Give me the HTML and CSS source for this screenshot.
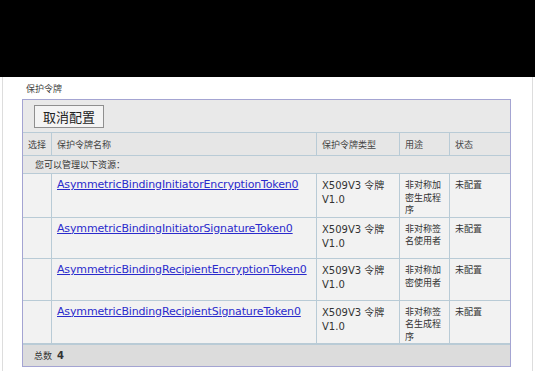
FILE: index.html
```html
<!DOCTYPE html>
<html lang="zh">
<head>
    <meta charset="UTF-8">
    <title>保护令牌</title>
    <link rel="stylesheet" href="styles.css">
</head>
<body>
    <div class="top-bar"></div>
    <div class="page">
        <div class="section-title">保护令牌</div>
        <div class="panel">
            <div class="toolbar">
                <button type="button" class="btn">取消配置</button>
            </div>
            <table class="grid">
                <tr class="head">
                    <td class="col-sel">选择</td>
                    <td class="col-name">保护令牌名称</td>
                    <td class="col-type">保护令牌类型</td>
                    <td class="col-use">用途</td>
                    <td class="col-state">状态</td>
                </tr>
                <tr class="info">
                    <td colspan="5">您可以管理以下资源：</td>
                </tr>
                <tr class="row">
                    <td></td>
                    <td><a href="#">AsymmetricBindingInitiatorEncryptionToken0</a></td>
                    <td class="type">X509V3 令牌 V1.0</td>
                    <td>非对称加密生成程序</td>
                    <td>未配置</td>
                </tr>
                <tr class="row">
                    <td></td>
                    <td><a href="#">AsymmetricBindingInitiatorSignatureToken0</a></td>
                    <td class="type">X509V3 令牌 V1.0</td>
                    <td>非对称签名使用者</td>
                    <td>未配置</td>
                </tr>
                <tr class="row">
                    <td></td>
                    <td><a href="#">AsymmetricBindingRecipientEncryptionToken0</a></td>
                    <td class="type">X509V3 令牌 V1.0</td>
                    <td>非对称加密使用者</td>
                    <td>未配置</td>
                </tr>
                <tr class="row">
                    <td></td>
                    <td><a href="#">AsymmetricBindingRecipientSignatureToken0</a></td>
                    <td class="type">X509V3 令牌 V1.0</td>
                    <td>非对称签名生成程序</td>
                    <td>未配置</td>
                </tr>
            </table>
            <div class="total">总数 <b>4</b></div>
        </div>
    </div>
</body>
</html>
```

FILE: styles.css
```css
body {
    margin: 0;
    background-color: #fff;
    font-family: "DejaVu Sans", "Noto Sans CJK SC", sans-serif;
    font-size: 10px;
    color: #333;
}
.top-bar {
    height: 77px;
    background-color: #000;
}
.page {
    margin: 0 2px;
    border-left: 1px solid #ddd;
    border-right: 1px solid #ddd;
    padding: 5px 20px 5px 19px;
    height: 289px;
}
.section-title {
    font-size: 9px;
    line-height: 14px;
    padding-left: 4px;
    margin-bottom: 3px;
    color: #444;
}
.panel {
    border: 1px solid #a4a4d2;
    width: 487px;
}
.toolbar {
    background-color: #e9e9e9;
    height: 33px;
    padding: 5px 0 0 11px;
    box-sizing: border-box;
    border-bottom: 1px solid #b9cbd6;
}
.btn {
    font-family: "Noto Sans CJK SC", sans-serif;
    font-size: 13px;
    width: 70px;
    height: 23px;
    padding: 0;
    background-color: #f4f4f4;
    border: 1px solid #8f8f8f;
    color: #222;
    line-height: 20px;
}
.grid {
    width: 100%;
    table-layout: fixed;
    border-collapse: collapse;
}
.grid td {
    border: 1px solid #b9cbd6;
    padding: 0 5px;
    vertical-align: top;
}
.grid tr > td:first-child {
    border-left: none;
}
.grid tr > td:last-child {
    border-right: none;
}
.grid tr:first-child td {
    border-top: none;
}
.head td {
    background-color: #e6e6e6;
    height: 22px;
    vertical-align: middle;
    font-size: 9px;
    color: #444;
}
.col-sel { width: 18px; }
.col-name { width: 254px; }
.col-type { width: 72px; }
.col-use { width: 39px; }
.info td {
    background-color: #e6e6e6;
    height: 17px;
    vertical-align: middle;
    font-size: 9px;
    padding-left: 12px;
}
.row td {
    background-color: #f2f2f2;
    height: 35.5px;
    padding-top: 5px;
    font-size: 9px;
    line-height: 12.5px;
}
.row a {
    color: #2b2bcc;
    font-size: 11px;
    letter-spacing: -0.15px;
    white-space: nowrap;
}
.row td.type {
    font-size: 10px;
    line-height: 14px;
    color: #333;
}
.total {
    background-color: #dcdcdc;
    height: 21px;
    line-height: 21px;
    padding-left: 11px;
    font-size: 9px;
    border-top: 1px solid #b9cbd6;
}
.total b {
    font-size: 10px;
    margin-left: 2px;
}
```
